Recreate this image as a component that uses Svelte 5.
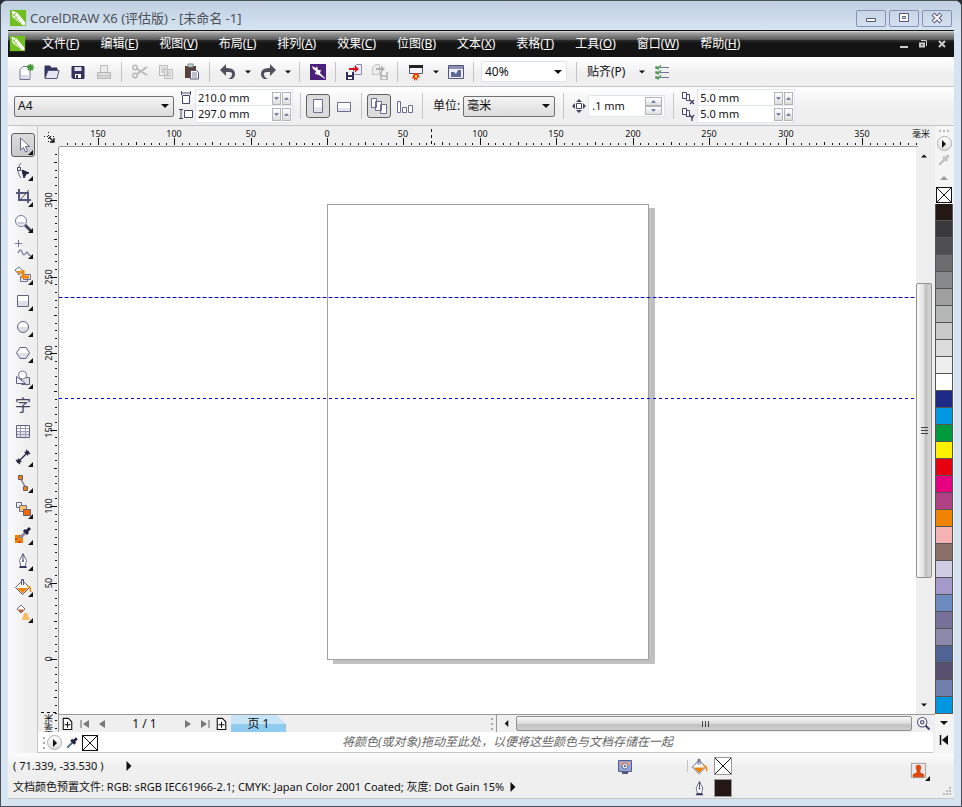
<script>
    const menus = [
        ['文件', 'F'], ['编辑', 'E'], ['视图', 'V'], ['布局', 'L'], ['排列', 'A'], ['效果', 'C'],
        ['位图', 'B'], ['文本', 'X'], ['表格', 'T'], ['工具', 'O'], ['窗口', 'W'], ['帮助', 'H']
    ];

    const tools = [
        { icon: 'pick', label: '选择', fly: true },
        { icon: 'shape', label: '形状', fly: true },
        { icon: 'crop', label: '裁剪', fly: true },
        { icon: 'zoom', label: '缩放', fly: true },
        { icon: 'freehand', label: '手绘', fly: true },
        { icon: 'smartfill', label: '智能填充', fly: true },
        { icon: 'rect', label: '矩形', fly: true },
        { icon: 'ellipse', label: '椭圆形', fly: true },
        { icon: 'polygon', label: '多边形', fly: true },
        { icon: 'basic', label: '基本形状', fly: true },
        { icon: 'text', label: '文本', fly: false },
        { icon: 'table', label: '表格', fly: false },
        { icon: 'dimension', label: '平行度量', fly: true },
        { icon: 'connector', label: '直线连接器', fly: true },
        { icon: 'blend', label: '调和', fly: true },
        { icon: 'dropper', label: '颜色滴管', fly: true },
        { icon: 'pen', label: '轮廓笔', fly: true },
        { icon: 'bucket', label: '填充', fly: true },
        { icon: 'meshfill', label: '交互式填充', fly: true }
    ];

    const swatches = [
        '#231815', '#3a3a3c', '#4e4e52', '#6d6d6f', '#88898a', '#9f9fa0', '#b4b7b6', '#c9c9ca',
        '#dbdbdc', '#eeeeef', '#ffffff', '#1f2a86', '#0099e1', '#009a3e', '#fff000', '#e60012',
        '#e5007f', '#b04084', '#f08400', '#f4b2b2', '#8a7068', '#cfcce4', '#a499cb', '#6b8abd',
        '#77719a', '#8a89a9', '#4f6493', '#57516f', '#6f80ad', '#0097e1'
    ];

    // ruler scale: pixels for one millimetre at 40 %
    const scale = 1.529;
    const originX = 268;
    const originY = 512;

    const steps = Array.from({ length: 141 }, (_, i) => (i - 60) * 5);
    const hTicks = steps.map((mm) => ({ mm, at: Math.round(originX + mm * scale) })).filter((t) => t.at > 0);
    const vTicks = steps.map((mm) => ({ mm, at: Math.round(originY - mm * scale) })).filter((t) => t.at > 2);

    let activeTool = $state('pick');
    let zoomLevel = $state('40%');
    let paper = $state('A4');
    let units = $state('毫米');

    function tickSize(mm) {
        if (mm % 50 === 0) return 7;
        return mm % 25 === 0 ? 3 : 2;
    }
</script>

{#snippet icon(name)}
    <svg class="icon" viewBox="0 0 20 20" aria-hidden="true">
        {#if name === 'logo'}
            <rect x="1" y="1" width="18" height="18" fill="#72bf22" />
            <path d="M3 2l6 2 9 11v3h-3L4 9z" fill="#fff" />
            <path d="M4 5l10 12M8 4l-3 4M10 8l-3 3" stroke="#72bf22" stroke-width="1" />
        {:else if name === 'new'}
            <path d="M4 7.500l3-3h7v13h-10z" fill="#fff" stroke="#70708e" />
            <path d="M5 13h8.500v4h-8.500z" fill="#dcdce8" />
            <path d="M14.500 2v7M11 5.500h7M12 3l5 5M17 3l-5 5" stroke="#3f9a35" stroke-width="1.600" />
        {:else if name === 'open'}
            <path d="M3 16V4h5l1 2h6v3" fill="#34345e" stroke="#34345e" />
            <path d="M3 16.500l3-8h11l-2 8z" fill="#e6e6f2" stroke="#55557a" />
        {:else if name === 'save'}
            <path d="M4 4.500h12v12h-11l-1-1z" fill="#34345e" stroke="#2c2c55" />
            <path d="M6.500 5h7v4h-7z" fill="#e4e4f0" />
            <path d="M7 12h6v4H7z" fill="#fff" />
            <path d="M8 13h2v3H8z" fill="#34345e" />
        {:else if name === 'print'}
            <path d="M6.500 11V3.500h7V11" fill="#ececec" stroke="#bbb" />
            <path d="M3.500 10.500h13v6h-13z" fill="#ddd" stroke="#b5b5b5" />
            <path d="M4 14h12" stroke="#bbb" />
        {:else if name === 'cut'}
            <path d="M7 7l10 6M7 12l10-7" stroke="#b9b9b9" stroke-width="2" />
            <circle cx="5" cy="5.500" r="2.200" fill="none" stroke="#b9b9b9" stroke-width="1.500" />
            <circle cx="5" cy="13.500" r="2.200" fill="none" stroke="#b9b9b9" stroke-width="1.500" />
        {:else if name === 'copy'}
            <path d="M3.500 3.500h8v10h-8zM8.500 7.500h8v9h-8z" fill="#eee" stroke="#bbb" />
            <path d="M5 6h5M5 8h3M5 10h3M10 10h5M10 12h5M10 14h5" stroke="#bbb" />
        {:else if name === 'paste'}
            <path d="M3 4h11v12H3z" fill="#5a4038" />
            <path d="M6 2h5v3H6z" fill="#c8dcdc" stroke="#7a8a8a" />
            <path d="M8.500 8.500h6l2 2v6.500h-8z" fill="#fff" stroke="#55557a" />
            <path d="M10 11h5M10 13h5M10 15h5" stroke="#7c7c9e" />
        {:else if name === 'undo'}
            <path d="M2 8l6-6v4c6 0 9 2 9 6 0 2-1 4-3 5h-4c3-1 4-3 4-5s-2-2-6-2v4z" fill="#4f4f5e" />
        {:else if name === 'redo'}
            <path d="M18 8l-6-6v4C6 6 3 8 3 12c0 2 1 4 3 5h4c-3-1-4-3-4-5s2-2 6-2v4z" fill="#4f4f5e" />
        {:else if name === 'launch'}
            <rect x="2" y="2" width="16" height="16" fill="#4b1f7c" />
            <path d="M4 4l4 2 1-2 1 4 3 0-1 3 5 5v1l-6-4-4-1 1-3-3-2z" fill="#fff" />
        {:else if name === 'import'}
            <path d="M9.500 5.500l3-3h5v10h-8z" fill="#eef" stroke="#8b8ba8" />
            <path d="M2 10h8v8H2z" fill="#2f2f58" />
            <path d="M4 10h4v3H4zM4 15h4v2H4z" fill="#fff" />
            <path d="M5 6h6V3.500l4 3.500-4 3.500V8H5z" fill="#d8101c" />
        {:else if name === 'export'}
            <path d="M2.500 5.500l3-3h4v10h-7z" fill="#ececec" stroke="#c4c4c4" />
            <path d="M10 10h8v8h-8z" fill="#bdbdbd" />
            <path d="M12 10h4v3h-4zM12 15h4v2h-4z" fill="#f4f4f4" />
            <path d="M6 6h5V3.500L15 7l-4 3.500V8H6z" fill="#adadad" />
        {:else if name === 'publish'}
            <path d="M3.500 4.500h13v7h-13z" fill="#f2f2fa" stroke="#55557a" />
            <path d="M3 3h14v3H3z" fill="#222" />
            <path d="M8 11h4l2 5-2-1-1 4-1-2-2 2v-3l-2 1z" fill="#e8380d" />
            <path d="M9 13h2v3H9z" fill="#ffd21e" />
        {:else if name === 'welcome'}
            <path d="M2.500 3.500h15v13h-15z" fill="#eef" stroke="#55557a" />
            <path d="M3 4h14v3H3z" fill="#8c90b4" />
            <path d="M5 10h3l2 2 2-4h3v7H5z" fill="#5f6a94" />
        {:else if name === 'options'}
            <path d="M8 5.500h9M8 10.500h9M8 15.500h9" stroke="#707090" />
            <path d="M3 4h4v3H3zM3 9h4v3H3zM3 14h4v3H3z" fill="#aaa" />
            <path d="M4 5l2 2 3-4M4 10l2 2 3-4M4 15l2 2 3-4" fill="none" stroke="#2f9a3a" stroke-width="1.200" />
        {:else if name === 'portrait'}
            <path d="M5.500 3.500h9v13h-9z" fill="#fff" stroke="#6d6d92" />
            <path d="M6 11h8v5H6z" fill="#e4e4ef" />
        {:else if name === 'landscape'}
            <path d="M3.500 6.500h13v9h-13z" fill="#fff" stroke="#6d6d92" />
            <path d="M4 12h12v3H4z" fill="#e4e4ef" />
        {:else if name === 'allpages'}
            <path d="M2.500 2.500h5v9h-5zM6.500 5.500h6v9h-6zM11.500 8.500h6v9h-6z" fill="#fff" stroke="#6d6d92" />
        {:else if name === 'onepage'}
            <path d="M2.500 5.500h3v11h-3zM7.500 11.500h4v5h-4zM13.500 9.500h4v7h-4z" fill="#fff" stroke="#6d6d92" />
        {:else if name === 'nudge'}
            <path d="M7.500 7.500h5v5h-5z" fill="#fff" stroke="#44445e" />
            <path d="M10 3l3 3H7zM10 17l3-3H7zM3 10l3-3v6zM17 10l-3-3v6z" fill="#44445e" />
        {:else if name === 'pick'}
            <path d="M7.500 3v12l3-2.500 2 4.500 2-1-2-4.500h4z" fill="#fff" stroke="#62628a" />
        {:else if name === 'shape'}
            <path d="M8 2c-4 5-4 10 0 15" fill="none" stroke="#6d6d92" />
            <path d="M4.500 6.500h3v3h-3z" fill="#fff" stroke="#44446a" />
            <path d="M9 9l7 3-3 1-2 4z" fill="#23233f" stroke="#23233f" />
        {:else if name === 'crop'}
            <path d="M3 6h12v10M6 2v11h12" fill="none" stroke="#55557a" stroke-width="2" />
            <path d="M7 13L16 3" stroke="#44446a" />
        {:else if name === 'zoom'}
            <path d="M12 12l6 6" stroke="#44445e" stroke-width="3" />
            <circle cx="8" cy="8" r="5.500" fill="#fff" stroke="#77779a" />
            <path d="M3.500 9h9a5 5 0 0 1-9 0z" fill="#c9c9dd" />
        {:else if name === 'freehand'}
            <path d="M5.500 1v7M2 4.500h7" stroke="#77779a" />
            <path d="M5 14c2-4 3-4 4-1s2 4 4 1 2 4 5 2" fill="none" stroke="#77779a" stroke-width="1.300" />
        {:else if name === 'smartfill'}
            <path d="M2 5l4-3 4 4-4 4z" fill="#fff" stroke="#6d6d92" />
            <path d="M3 6h6L6 9z" fill="#f08400" />
            <path d="M10.500 9.500h7v5h-7zM7.500 11.500h7v5h-7z" fill="#eeeef6" stroke="#6d6d92" />
            <path d="M10 5v7h6" fill="none" stroke="#f08400" stroke-width="3" />
        {:else if name === 'rect'}
            <path d="M4.500 4.500h11v11h-11z" fill="#fff" stroke="#62627e" />
            <path d="M5 10h10v5H5z" fill="#dedee9" />
        {:else if name === 'ellipse'}
            <circle cx="10" cy="10" r="5.500" fill="#fff" />
            <path d="M4.500 10h11a5.500 5.500 0 0 1-11 0z" fill="#dedee9" />
            <circle cx="10" cy="10" r="5.500" fill="none" stroke="#62627e" />
        {:else if name === 'polygon'}
            <path d="M7 4.500h6l3.500 5.500-3.500 5.500H7L3.500 10z" fill="#fff" />
            <path d="M3.500 10h13L13 15.500H7z" fill="#dedee9" />
            <path d="M7 4.500h6l3.500 5.500-3.500 5.500H7L3.500 10z" fill="none" stroke="#62627e" />
        {:else if name === 'basic'}
            <path d="M8.500 8.500h8v7h-8z" fill="#dedee9" stroke="#62627e" />
            <circle cx="9.500" cy="6" r="4" fill="#fff" stroke="#77779a" />
            <path d="M3.500 7.500v7h9z" fill="#eef" stroke="#62627e" />
        {:else if name === 'table'}
            <path d="M3.500 4.500h13v12h-13z" fill="#fff" stroke="#62627e" />
            <path d="M4 11h12v5H4z" fill="#dedee9" />
            <path d="M4 7.500h12M4 10.500h12M4 13.500h12M7.500 5v11M12.500 5v11" stroke="#9c9cb6" />
        {:else if name === 'dimension'}
            <path d="M5 15L15 5M3 13l4 4M13 3l4 4" stroke="#23233f" stroke-width="1.300" />
            <path d="M4 16l1-5 4 4zM16 4l-1 5-4-4z" fill="#23233f" />
        {:else if name === 'connector'}
            <path d="M7 5l6 10" stroke="#6d6d92" stroke-width="1.300" />
            <path d="M5.500 2.500h4v4h-4zM10.500 13.500h4v4h-4z" fill="#f08400" stroke="#6d5a6a" />
        {:else if name === 'blend'}
            <path d="M3.500 3.500h5v5h-5z" fill="#fff" stroke="#62627e" />
            <path d="M6.500 6.500h7v6h-7z" fill="#fbc56d" stroke="#7a7090" />
            <path d="M10.500 10.500h7v6h-7z" fill="#ee6a10" stroke="#6d5a6a" />
        {:else if name === 'dropper'}
            <path d="M2 10h8v8H2z" fill="#f08400" />
            <path d="M2 13h2v2H2zM6 10h2v2H6zM5 16h3v2H5z" fill="#e04a10" />
            <path d="M7 13l6-6" stroke="#8b8ba8" stroke-width="3" />
            <path d="M11 5l4 4M13 7l4-4" stroke="#23233f" stroke-width="3" />
        {:else if name === 'eyedropper' || name === 'eyedropper-off'}
            {@const off = name === 'eyedropper-off'}
            <path d="M4 16l8-8" stroke={off ? '#bbb' : '#55708e'} stroke-width="2.500" />
            <path d="M9 6l5 5M12 8l4-4" stroke={off ? '#c2c2c2' : '#23233f'} stroke-width="3.500" />
        {:else if name === 'pen'}
            <path d="M10 2.500l3.500 7-1.500 6H8l-1.500-6z" fill="#fff" stroke="#6d6d92" />
            <path d="M10 3v6" stroke="#44446a" />
            <circle cx="10" cy="10" r="1" fill="#44446a" />
            <path d="M7 15h6l1 2H6z" fill="#34345e" />
        {:else if name === 'bucket'}
            <path d="M2.500 10.500L9.500 3.500l7 7-7 7z" fill="#fff" stroke="#55557a" />
            <path d="M4 11h11L9.500 16.500z" fill="#f08400" />
            <path d="M8.500 8V2.500h2V8" fill="none" stroke="#55557a" />
            <path d="M14 9q4 0 3.500 6" fill="none" stroke="#f08400" stroke-width="1.500" />
        {:else if name === 'meshfill'}
            <path d="M4 6l4-4 4 4-4 4z" fill="#fff" stroke="#6d6d92" />
            <path d="M5 6.500h6L8 9.500z" fill="#c8601c" />
            <path d="M11 10h3l3 7H9z" fill="#f7bb62" />
        {:else if name === 'zoomfit'}
            <path d="M12 12l5 5" stroke="#44447a" stroke-width="2.500" />
            <circle cx="8.500" cy="8.500" r="5.500" fill="#fff" stroke="#55557a" stroke-width="1.300" />
            <circle cx="8.500" cy="8.500" r="2" fill="none" stroke="#55557a" stroke-width="1.500" />
        {:else if name === 'addpage'}
            <path d="M5 4h6l4 4v9H5z" fill="#fff" stroke="#111" stroke-width="1.300" />
            <path d="M10 8v7M6.500 11.500h7" stroke="#111" stroke-width="1.300" />
        {:else if name === 'proof'}
            <path d="M3.500 4.500h13v11h-13z" fill="#8fa6d8" stroke="#5c5c88" />
            <path d="M5 6h10v3H5z" fill="#e8a08c" />
            <circle cx="10" cy="10" r="3" fill="#e4e4e4" stroke="#77779a" />
            <circle cx="10" cy="10" r="1" fill="#55557a" />
            <path d="M7 17h6" stroke="#55557a" stroke-width="2" />
        {:else if name === 'person'}
            <path d="M2.500 2.500h15v15h-15z" fill="#e8e8ea" stroke="#9a9a9a" />
            <path d="M10 4c3 0 3.500 3 2 6v2l4 2v3H4v-3l4-2v-2C6.500 7 7 4 10 4z" fill="#dc4a0c" />
        {/if}
    </svg>
{/snippet}

{#snippet arrow(dir)}
    <svg class="arrow {dir}" viewBox="0 0 8 8" aria-hidden="true"><path d="M0 2h8L4 6z" fill="currentColor" /></svg>
{/snippet}

{#snippet dupe(axis)}
    <svg class="dupe" viewBox="0 0 14 14" aria-hidden="true">
        <path d="M1.500 1.500h4v6h-4zM5.500 3.500h3v6h-3z" fill="#fff" stroke="#44446a" />
        {#if axis === 'x'}
            <path d="M9 9l4 4M13 9l-4 4" stroke="#44446a" stroke-width="1.400" />
        {:else}
            <path d="M9 8l2 3 2-3M11 11v3" fill="none" stroke="#44446a" stroke-width="1.400" />
        {/if}
    </svg>
{/snippet}

{#snippet spin(label, value)}
    <div class="spin">
        <input type="text" aria-label={label} {value} />
        <button aria-label="{label} 减小">{@render arrow('down')}</button>
        <button aria-label="{label} 增大">{@render arrow('up')}</button>
    </div>
{/snippet}

{#snippet tool(name, label)}
    <button class="tool" aria-label={label}>{@render icon(name)}</button>
{/snippet}

{#snippet drop(label)}
    <button class="drop" aria-label={label}>{@render arrow('down')}</button>
{/snippet}

<div class="window">
    <header class="titlebar">
        {@render icon('logo')}
        <h1>CorelDRAW X6 (评估版) - [未命名 -1]</h1>
        <div class="captions">
            <button aria-label="最小化"><svg viewBox="0 0 14 12"><path d="M2.500 6.500h9v3h-9z" fill="#fff" stroke="#55587a" /></svg></button>
            <button aria-label="还原"><svg viewBox="0 0 14 12"><path d="M2.500 1.500h9v8h-9z" fill="#fff" stroke="#55587a" /><path d="M5.500 4.500h3v2h-3z" fill="#fff" stroke="#55587a" /></svg></button>
            <button aria-label="关闭"><svg viewBox="0 0 14 12"><path d="M3 2l8 8M11 2l-8 8" stroke="#55587a" stroke-width="4" /><path d="M3.500 2.500l7 7M10.500 2.500l-7 7" stroke="#fff" stroke-width="2" /></svg></button>
        </div>
    </header>

    <nav class="menubar">
        {@render icon('logo')}
        <div class="menus">
            {#each menus as [name, key]}
                <button>{name}(<u>{key}</u>)</button>
            {/each}
        </div>
        <div class="doc-controls">
            <button aria-label="最小化文档"><svg viewBox="0 0 10 10"><path d="M1 7h8v2H1z" fill="#ccc" /></svg></button>
            <button aria-label="还原文档"><svg viewBox="0 0 10 10"><path d="M3 1.500h5.500V7" fill="none" stroke="#ccc" /><path d="M2 4.500h4v3H2z" fill="none" stroke="#ccc" stroke-width="2" /></svg></button>
            <button aria-label="关闭文档"><svg viewBox="0 0 10 10"><path d="M2 2l6 6M8 2L2 8" stroke="#ccc" stroke-width="2" /></svg></button>
        </div>
    </nav>

    <div class="toolbar standard">
        {@render tool('new', '新建')}
        {@render tool('open', '打开')}
        {@render tool('save', '保存')}
        {@render tool('print', '打印')}
        <span class="sep"></span>
        {@render tool('cut', '剪切')}
        {@render tool('copy', '复制')}
        {@render tool('paste', '粘贴')}
        <span class="sep"></span>
        {@render tool('undo', '撤消')}
        {@render drop('撤消列表')}
        {@render tool('redo', '重做')}
        {@render drop('重做列表')}
        <span class="sep"></span>
        {@render tool('launch', '搜索内容')}
        <span class="sep"></span>
        {@render tool('import', '导入')}
        {@render tool('export', '导出')}
        <span class="sep"></span>
        {@render tool('publish', '应用程序启动器')}
        {@render drop('应用程序列表')}
        {@render tool('welcome', '欢迎屏幕')}
        <span class="sep"></span>
        <div class="combo flat">
            <select aria-label="缩放级别" bind:value={zoomLevel}>
                <option>40%</option>
                <option>100%</option>
            </select>
            {@render arrow('down')}
        </div>
        <span class="sep wide"></span>
        <button class="snap">贴齐(P)</button>
        {@render drop('贴齐列表')}
        {@render tool('options', '选项')}
    </div>

    <div class="toolbar property">
        <div class="combo paper">
            <select aria-label="页面大小" bind:value={paper}>
                <option>A4</option>
                <option>A3</option>
            </select>
            {@render arrow('down')}
        </div>
        <div class="pair">
            <svg class="dupe" viewBox="0 0 14 14" aria-hidden="true"><path d="M2.500 0v4M11.500 0v4M3 2h8" stroke="#44446a" /><path d="M3.500 4.500h7v8h-7z" fill="#fff" stroke="#44446a" /></svg>
            {@render spin('页面宽度', '210.0 mm')}
            <svg class="dupe" viewBox="0 0 14 14" aria-hidden="true"><path d="M0 2.500h4M0 11.500h4M2 3v8" stroke="#44446a" /><path d="M5.500 3.500h8v7h-8z" fill="#fff" stroke="#44446a" /></svg>
            {@render spin('页面高度', '297.0 mm')}
        </div>
        <span class="sep tall"></span>
        <button class="toggle on" aria-label="纵向">{@render icon('portrait')}</button>
        <button class="toggle" aria-label="横向">{@render icon('landscape')}</button>
        <span class="sep tall"></span>
        <button class="toggle on" aria-label="所有页面">{@render icon('allpages')}</button>
        <button class="toggle" aria-label="当前页">{@render icon('onepage')}</button>
        <span class="sep tall"></span>
        <label class="caption" for="units">单位:</label>
        <div class="combo units">
            <select id="units" bind:value={units}>
                <option>毫米</option>
                <option>英寸</option>
            </select>
            {@render arrow('down')}
        </div>
        <span class="sep tall"></span>
        {@render icon('nudge')}
        <div class="nudge">
            <input type="text" aria-label="微调偏移" value=".1 mm" />
            <div class="stack">
                <button aria-label="增大微调">{@render arrow('up')}</button>
                <button aria-label="减小微调">{@render arrow('down')}</button>
            </div>
        </div>
        <span class="sep tall"></span>
        <div class="pair offsets">
            {@render dupe('x')}
            {@render spin('再制距离 X', '5.0 mm')}
            {@render dupe('y')}
            {@render spin('再制距离 Y', '5.0 mm')}
        </div>
    </div>

    <main>
        <aside class="toolbox">
            {#each tools as t}
                <button class:active={activeTool === t.icon} aria-label={t.label} onclick={() => (activeTool = t.icon)}>
                    {#if t.icon === 'text'}
                        <span class="glyph">字</span>
                    {:else}
                        {@render icon(t.icon)}
                    {/if}
                    {#if t.fly}<i class="fly"></i>{/if}
                </button>
            {/each}
        </aside>

        <div class="document">
            <div class="top-ruler">
                <div class="corner">
                    <svg viewBox="0 0 20 20" aria-hidden="true"><path d="M10.500 6v12M6 10.500h12" stroke="#111" stroke-dasharray="1 2" /><path d="M11 11l5 5M16 12v4h-4" fill="none" stroke="#111" stroke-width="1.300" /></svg>
                </div>
                <svg class="ruler">
                    {#each hTicks as t}
                        <rect x={t.at} y={19 - tickSize(t.mm)} width="1" height={tickSize(t.mm)} />
                        {#if t.mm % 50 === 0 && t.mm < 400}
                            <text x={t.at} y="11" text-anchor="middle">{Math.abs(t.mm)}</text>
                        {/if}
                    {/each}
                    <path d="M372.500 3v16" stroke="#111" stroke-dasharray="3 3" />
                </svg>
                <span class="unit">毫米</span>
            </div>

            <div class="work">
                <div class="side-ruler">
                    <svg class="ruler">
                        {#each vTicks as t}
                            <rect x={19 - tickSize(t.mm)} y={t.at} width={tickSize(t.mm)} height="1" />
                            {#if t.mm % 50 === 0 && t.mm >= 0}
                                <text transform="translate(14 {t.at}) rotate(-90)" text-anchor="middle">{t.mm}</text>
                            {/if}
                        {/each}
                        <path d="M3 565.500h16" stroke="#111" stroke-dasharray="3 3" />
                    </svg>
                    <span class="unit">毫米</span>
                </div>

                <div class="pane">
                    <div class="view">
                        <div class="canvas">
                            <div class="page"></div>
                            <div class="guide first"></div>
                            <div class="guide second"></div>
                        </div>
                        <div class="vscroll">
                            <button aria-label="向上滚动">{@render arrow('up')}</button>
                            <div class="vtrack">
                                <div class="vthumb"><i></i><i></i><i></i></div>
                            </div>
                            <button aria-label="向下滚动">{@render arrow('down')}</button>
                        </div>
                    </div>
                    <div class="navigator">
                        <div class="pages">
                            <button class="nav" aria-label="在前面添加页">{@render icon('addpage')}</button>
                            <button class="nav" aria-label="第一页"><svg viewBox="0 0 10 10"><path d="M1 1v8" stroke="#666" /><path d="M9 1v8L3 5z" fill="#777" /></svg></button>
                            <button class="nav" aria-label="上一页"><svg viewBox="0 0 10 10"><path d="M8 1v8L2 5z" fill="#777" /></svg></button>
                            <span class="count">1 / 1</span>
                            <button class="nav" aria-label="下一页"><svg viewBox="0 0 10 10"><path d="M2 1v8l6-4z" fill="#777" /></svg></button>
                            <button class="nav" aria-label="最后一页"><svg viewBox="0 0 10 10"><path d="M9 1v8" stroke="#666" /><path d="M1 1v8l6-4z" fill="#777" /></svg></button>
                            <button class="nav" aria-label="在后面添加页">{@render icon('addpage')}</button>
                            <button class="tab">页 1</button>
                            <span class="grip"></span>
                        </div>
                        <div class="hscroll">
                            <button aria-label="向左滚动">{@render arrow('left')}</button>
                            <div class="hthumb"><i></i><i></i><i></i></div>
                            <button class="navview" aria-label="导航器">{@render icon('zoomfit')}</button>
                        </div>
                    </div>
                </div>
            </div>

            <div class="doc-palette">
                <div class="doc-tools">
                    <span class="grip"></span>
                    <button class="round" aria-label="文档调色板菜单">{@render arrow('right')}</button>
                    <button class="mini" aria-label="取样颜色">{@render icon('eyedropper')}</button>
                    <button class="none" aria-label="无颜色"></button>
                </div>
                <em>将颜色(或对象)拖动至此处，以便将这些颜色与文档存储在一起</em>
            </div>
        </div>

        <aside class="palette">
            <span class="dots"></span>
            <button class="round" aria-label="调色板菜单">{@render arrow('right')}</button>
            <button class="mini" aria-label="滴管">{@render icon('eyedropper-off')}</button>
            <button class="step dim" aria-label="向上滚动调色板">{@render arrow('up')}</button>
            <button class="none" aria-label="无填充"></button>
            <div class="swatches">
                {#each swatches as color}
                    <button style="background-color: {color}" aria-label={color}></button>
                {/each}
            </div>
            <button class="step" aria-label="向下滚动调色板">{@render arrow('down')}</button>
            <button class="expand" aria-label="展开调色板"><svg viewBox="0 0 10 12"><path d="M1.500 1v10" stroke="#111" stroke-width="1.500" /><path d="M9 1v10L3 6z" fill="#111" /></svg></button>
        </aside>
    </main>

    <footer class="statusbar">
        <div class="info">
            <p>
                <span class="coords">( 71.339, -33.530 )</span>
                <button class="more" aria-label="状态栏选项">{@render arrow('right')}</button>
                <span class="proof">{@render icon('proof')}</span>
                <span class="divider"></span>
            </p>
            <p>
                <span>文档颜色预置文件: RGB: sRGB IEC61966-2.1; CMYK: Japan Color 2001 Coated; 灰度: Dot Gain 15%</span>
                <button class="more" aria-label="颜色设置">{@render arrow('right')}</button>
            </p>
        </div>
        <div class="object">
            {@render icon('bucket')}<span class="none"></span>
            {@render icon('pen')}<span class="ink"></span>
        </div>
        <div class="account">
            <button class="user" aria-label="登录">{@render icon('person')}<i class="fly"></i></button>
            <svg class="resize" viewBox="0 0 9 9" aria-hidden="true"><path d="M7 0h2v2H7zM4 3h2v2H4zM7 3h2v2H7zM1 6h2v2H1zM4 6h2v2H4zM7 6h2v2H7z" fill="#bbb" /></svg>
        </div>
    </footer>
</div>

<style>
    :global(body) {
        margin: 0;
        background: #2b2b33;
    }

    .window {
        display: flex;
        flex-direction: column;
        box-sizing: border-box;
        min-height: 100vh;
        padding: 0 7px 7px;
        border: 1px solid #4c4f58;
        border-radius: 7px 7px 0 0;
        background: #d6e3f1;
        color: #111;
        font: 12px/16px "Noto Sans", "Noto Sans CJK SC", sans-serif;
    }

    button, input, select {
        box-sizing: border-box;
        margin: 0;
        padding: 0;
        border: 0;
        border-radius: 0;
        background: none;
        color: inherit;
        font: inherit;
    }

    button {
        display: flex;
        align-items: center;
        justify-content: center;
    }

    svg {
        display: block;
        flex: none;
    }

    .icon {
        width: 20px;
        height: 20px;
    }

    .arrow {
        width: 8px;
        height: 8px;
    }

    .up {
        transform: rotate(180deg);
    }

    .left {
        transform: rotate(90deg);
    }

    .right {
        transform: rotate(-90deg);
    }

    .titlebar {
        display: flex;
        align-items: center;
        gap: 3px;
        height: 29px;
        margin: 0 -7px;
        padding: 5px 9px 0 8px;
        box-sizing: border-box;
        border-radius: 6px 6px 0 0;
        background: linear-gradient(#bfd0e2, #d6e3f1);
    }

    .titlebar .icon {
        width: 18px;
        height: 18px;
    }

    h1 {
        flex: 1;
        margin: 0;
        color: #4d5058;
        font-size: 13px;
        font-weight: 400;
    }

    .captions {
        display: flex;
        gap: 3px;
    }

    .captions button {
        width: 30px;
        height: 17px;
        border: 1px solid #8b90b2;
        border-radius: 2px;
    }

    .captions svg {
        width: 14px;
        height: 12px;
    }

    .menubar {
        display: flex;
        align-items: center;
        height: 27px;
        padding: 0 7px 0 1px;
        background: linear-gradient(#111 0, #111 1px, #e0e0e0 1px, #a0a0a0 3px, #555 10px, #2e2e2e 10px, #141414 13px);
        color: #fff;
    }

    .menubar .icon {
        width: 17px;
        height: 17px;
    }

    .menus {
        display: flex;
        flex: 1;
        gap: 21px;
        padding-left: 16px;
    }

    .doc-controls {
        display: flex;
        gap: 9px;
    }

    .doc-controls svg {
        width: 10px;
        height: 10px;
    }

    .toolbar {
        display: flex;
        align-items: center;
        box-sizing: border-box;
        border-bottom: 1px solid #c4c4c4;
        background: linear-gradient(#fff, #efefef 60%);
    }

    .standard {
        height: 30px;
        padding-left: 5px;
    }

    .tool {
        width: 26px;
        height: 24px;
    }

    .drop {
        width: 14px;
        height: 24px;
    }

    .drop .arrow {
        width: 6px;
        height: 6px;
    }

    .sep {
        width: 1px;
        height: 20px;
        margin: 0 5px 0 4px;
        background: #c4c4c4;
    }

    .sep.wide {
        margin: 0 10px 0 9px;
    }

    .sep.tall {
        height: 26px;
        margin: 0 5px 0 3px;
    }

    .snap {
        margin-right: 10px;
    }

    .combo {
        display: flex;
        position: relative;
        align-items: center;
        box-sizing: border-box;
        height: 21px;
        border: 1px solid #707070;
        border-radius: 2px;
        background: linear-gradient(#f4f4f4, #dcdcdc);
    }

    .combo select {
        width: 100%;
        height: 100%;
        padding: 0 16px 0 3px;
        appearance: none;
    }

    .combo .arrow {
        position: absolute;
        right: 4px;
        pointer-events: none;
    }

    .combo.flat {
        width: 86px;
        margin-left: 2px;
        border-color: #dfe3ea;
        background: #fff;
    }

    .property {
        height: 39px;
        padding-left: 6px;
        font-size: 11px;
    }

    .paper {
        width: 160px;
        margin-right: 5px;
        font-size: 12px;
    }

    .pair {
        display: grid;
        grid-template-columns: 14px 96px;
        column-gap: 3px;
        align-items: center;
        margin-right: 5px;
    }

    .offsets {
        margin-left: 2px;
    }

    .dupe {
        width: 14px;
        height: 14px;
    }

    .spin {
        display: flex;
        align-items: center;
        gap: 1px;
        height: 16px;
        padding-right: 1px;
        background: #fff;
        box-shadow: 0 0 0 1px #e2e6f0;
    }

    .spin input {
        flex: 1;
        min-width: 0;
        height: 16px;
        padding-left: 2px;
    }

    .spin button, .stack button {
        width: 9px;
        height: 13px;
        border: 1px solid #b4b4b4;
        background: linear-gradient(#fff, #dedede);
        color: #5a6c9c;
    }

    .spin .arrow, .stack .arrow {
        width: 5px;
        height: 5px;
    }

    .toggle {
        width: 24px;
        height: 24px;
        margin-right: 2px;
        border: 1px solid transparent;
        border-radius: 3px;
    }

    .toggle.on {
        border-color: #606060;
        background: #dcdcdc;
    }

    .caption {
        margin: 0 3px 0 5px;
        font-size: 12px;
    }

    .units {
        width: 92px;
        margin-right: 5px;
        font-size: 12px;
    }

    .nudge {
        display: flex;
        align-items: center;
        width: 75px;
        height: 20px;
        margin-right: 6px;
        background: #fff;
        box-shadow: 0 0 0 1px #e2e6f0;
    }

    .nudge input {
        flex: 1;
        min-width: 0;
        padding-left: 3px;
    }

    .stack {
        margin-right: 2px;
    }

    .stack button {
        width: 17px;
        height: 9px;
    }

    main {
        display: flex;
        flex: 1;
        background: #efefef;
    }

    .toolbox {
        flex: none;
        box-sizing: border-box;
        width: 30px;
        padding: 6px 0 0 3px;
        border-right: 1px solid #c4c4c4;
        background: linear-gradient(90deg, #fbfbfb, #efefef 60%);
    }

    .toolbox button {
        position: relative;
        width: 24px;
        height: 24px;
        margin: 1px 0 2px;
        border: 1px solid transparent;
        border-radius: 3px;
    }

    .toolbox button.active {
        border-color: #606060;
        background: linear-gradient(#dcdcdc, #c9c9c9);
    }

    .fly {
        position: absolute;
        right: 1px;
        bottom: 1px;
        width: 5px;
        height: 5px;
        clip-path: polygon(100% 0, 100% 100%, 0 100%);
        background: #111;
    }

    .glyph {
        color: #44445e;
        font-size: 16px;
        line-height: 20px;
    }

    .document {
        display: flex;
        flex: 1;
        flex-direction: column;
        min-width: 0;
    }

    .top-ruler {
        display: flex;
        position: relative;
        box-sizing: border-box;
        height: 21px;
    }

    .corner {
        flex: none;
        width: 21px;
    }

    .corner svg {
        width: 20px;
        height: 20px;
    }

    .ruler {
        flex: 1;
        min-width: 0;
        overflow: hidden;
        fill: #111;
        font-size: 9px;
    }

    .top-ruler .ruler {
        height: 20px;
        margin-right: 17px;
        border-bottom: 1px solid #999;
    }

    .unit {
        font-size: 9px;
        line-height: 12px;
    }

    .top-ruler .unit {
        position: absolute;
        top: 2px;
        right: 5px;
    }

    .work {
        display: flex;
        flex: 1;
    }

    .side-ruler {
        display: flex;
        position: relative;
        flex: none;
        box-sizing: border-box;
        width: 21px;
        border-right: 1px solid #999;
    }

    .side-ruler .ruler {
        position: absolute;
        width: 20px;
        height: 100%;
    }

    .side-ruler .unit {
        align-self: flex-end;
        margin-left: 5px;
        writing-mode: vertical-rl;
        transform: rotate(180deg);
    }

    .pane {
        display: flex;
        flex: 1;
        flex-direction: column;
        min-width: 0;
    }

    .view {
        display: flex;
        flex: 1;
    }

    .canvas {
        position: relative;
        flex: 1;
        overflow: hidden;
        background: #fff;
    }

    .page {
        position: absolute;
        top: 57px;
        left: 268px;
        box-sizing: border-box;
        width: 322px;
        height: 456px;
        border: 1px solid #a0a0a0;
        background: #fff;
        box-shadow: 6px 4px 0 #c0c0c0;
    }

    .guide {
        position: absolute;
        right: 0;
        left: 0;
        height: 1px;
        background: repeating-linear-gradient(90deg, #0000e8 0, #0000e8 3px, transparent 3px, transparent 6px);
    }

    .first {
        top: 150px;
        background: repeating-linear-gradient(90deg, #0000b8 0, #0000b8 3px, #9494d4 3px, #9494d4 4px, transparent 4px, transparent 5px, #9494d4 5px, #9494d4 6px);
    }

    .second {
        top: 251px;
    }

    .vscroll {
        display: flex;
        flex-direction: column;
        width: 16px;
        margin-right: 3px;
        background: #efefef;
    }

    .vscroll button {
        height: 18px;
    }

    .vscroll .arrow {
        width: 6px;
        height: 6px;
    }

    .vtrack {
        display: flex;
        flex: 1;
        flex-direction: column;
        justify-content: center;
    }

    .vthumb {
        display: flex;
        flex-direction: column;
        align-items: center;
        justify-content: center;
        gap: 2px;
        height: 55%;
        border: 1px solid #909090;
        border-radius: 2px;
        background: linear-gradient(90deg, #fafafa, #e0e0e0 50%, #c0c0c0 60%, #d8d8d8);
    }

    .vthumb i {
        width: 7px;
        height: 1px;
        background: #444;
    }

    .navigator {
        display: flex;
        box-sizing: border-box;
        height: 18px;
        border-top: 1px solid #999;
    }

    .pages {
        display: flex;
        flex: 1;
        align-items: center;
        border-right: 1px solid #999;
    }

    .nav {
        width: 17px;
        height: 16px;
    }

    .nav svg:not(.icon) {
        width: 10px;
        height: 10px;
    }

    .nav .icon {
        width: 17px;
        height: 17px;
    }

    .count {
        width: 69px;
        text-align: center;
    }

    .tab {
        width: 55px;
        height: 17px;
        margin-left: 1px;
        clip-path: polygon(0 0, 46px 0, 100% 9px, 100% 100%, 0 100%);
        background: linear-gradient(#c6e4f5 50%, #8ecbee 55%);
    }

    .grip {
        width: 2px;
        height: 12px;
        background: repeating-linear-gradient(#aaa 0, #aaa 2px, transparent 2px, transparent 5px);
    }

    .pages .grip {
        margin: 0 3px 0 auto;
    }

    .hscroll {
        display: flex;
        flex: 1;
        align-items: center;
        margin-right: 2px;
    }

    .hscroll button {
        width: 19px;
        height: 17px;
    }

    .hscroll .arrow {
        width: 7px;
        height: 7px;
    }

    .hthumb {
        display: flex;
        flex: 1;
        align-items: center;
        justify-content: center;
        gap: 2px;
        box-sizing: border-box;
        height: 15px;
        margin-right: 2px;
        padding-right: 16px;
        border: 1px solid #909090;
        border-radius: 2px;
        background: linear-gradient(#f8f8f8, #dcdcdc 50%, #c0c0c0 60%, #d0d0d0);
    }

    .hthumb i {
        width: 1px;
        height: 6px;
        background: #444;
    }

    .navview .icon {
        width: 17px;
        height: 17px;
    }

    .doc-palette {
        display: flex;
        align-items: center;
        box-sizing: border-box;
        height: 21px;
        margin-right: 2px;
        border-bottom: 1px solid #c4c4c4;
        background: #fff;
        color: #666;
    }

    .doc-palette em {
        flex: 1;
        padding-right: 16px;
        text-align: center;
    }

    .doc-tools {
        display: flex;
        align-items: center;
        gap: 2px;
        padding: 1px 0 0 5px;
    }

    .round {
        width: 15px;
        height: 15px;
        border: 1px solid #b0b0b0;
        border-radius: 50%;
        background: linear-gradient(#fff, #e0e0e0);
        color: #111;
    }

    .mini .icon {
        width: 16px;
        height: 16px;
    }

    .none {
        box-sizing: border-box;
        width: 16px;
        height: 16px;
        border: 1px solid #111;
        background:
            linear-gradient(45deg, transparent 48%, #111 48%, #111 52%, transparent 52%),
            linear-gradient(135deg, transparent 48%, #111 48%, #111 52%, transparent 52%),
            #fff;
    }

    .palette {
        display: flex;
        flex: none;
        flex-direction: column;
        align-items: center;
        width: 18px;
        padding-right: 1px;
        background: #f4f4f4;
    }

    .dots {
        width: 10px;
        height: 2px;
        margin: 4px 0;
        background: repeating-linear-gradient(90deg, #bbb 0, #bbb 2px, transparent 2px, transparent 4px);
    }

    .palette .mini {
        height: 18px;
    }

    .step {
        height: 17px;
    }

    .dim {
        color: #999;
    }

    .palette .none {
        margin: 1px 0;
    }

    .swatches button {
        width: 18px;
        height: 17px;
        border: 1px solid #555;
        border-top: 0;
    }

    .expand {
        height: 17px;
    }

    .expand svg {
        width: 10px;
        height: 12px;
    }

    .statusbar {
        display: flex;
        align-items: flex-start;
        box-sizing: border-box;
        height: 46px;
        border-bottom: 1px solid #c4c4c4;
        background: linear-gradient(#fcfcfc, #efefef 14px);
    }

    .info {
        flex: 34;
        padding: 2px 0 0 5px;
        font-size: 11px;
        white-space: nowrap;
    }

    .info p {
        display: flex;
        align-items: center;
        height: 21px;
        margin: 0;
    }

    .info .more {
        margin-left: 4px;
    }

    .info .coords + .more {
        margin-left: 20px;
    }

    .info .arrow {
        width: 10px;
        height: 10px;
    }

    .proof {
        margin: 0 52px 0 auto;
    }

    .divider {
        width: 1px;
        height: 12px;
        margin-right: 2px;
        background: #c4c4c4;
    }

    .object {
        display: grid;
        grid-template-columns: 20px 18px;
        gap: 3px 4px;
        padding-top: 4px;
    }

    .object .icon {
        width: 19px;
        height: 19px;
    }

    .object .none, .ink {
        box-sizing: border-box;
        width: 18px;
        height: 18px;
        border: 1px solid #999;
    }

    .ink {
        background-color: #231815;
    }

    .account {
        display: flex;
        flex: 11;
        align-items: flex-start;
        justify-content: flex-end;
        gap: 14px;
        padding: 8px 3px 0 0;
    }

    .user {
        position: relative;
    }

    .user .icon {
        width: 19px;
        height: 19px;
    }

    .user .fly {
        right: -2px;
        bottom: -1px;
    }

    .resize {
        width: 9px;
        height: 9px;
        margin-top: 26px;
    }
</style>
